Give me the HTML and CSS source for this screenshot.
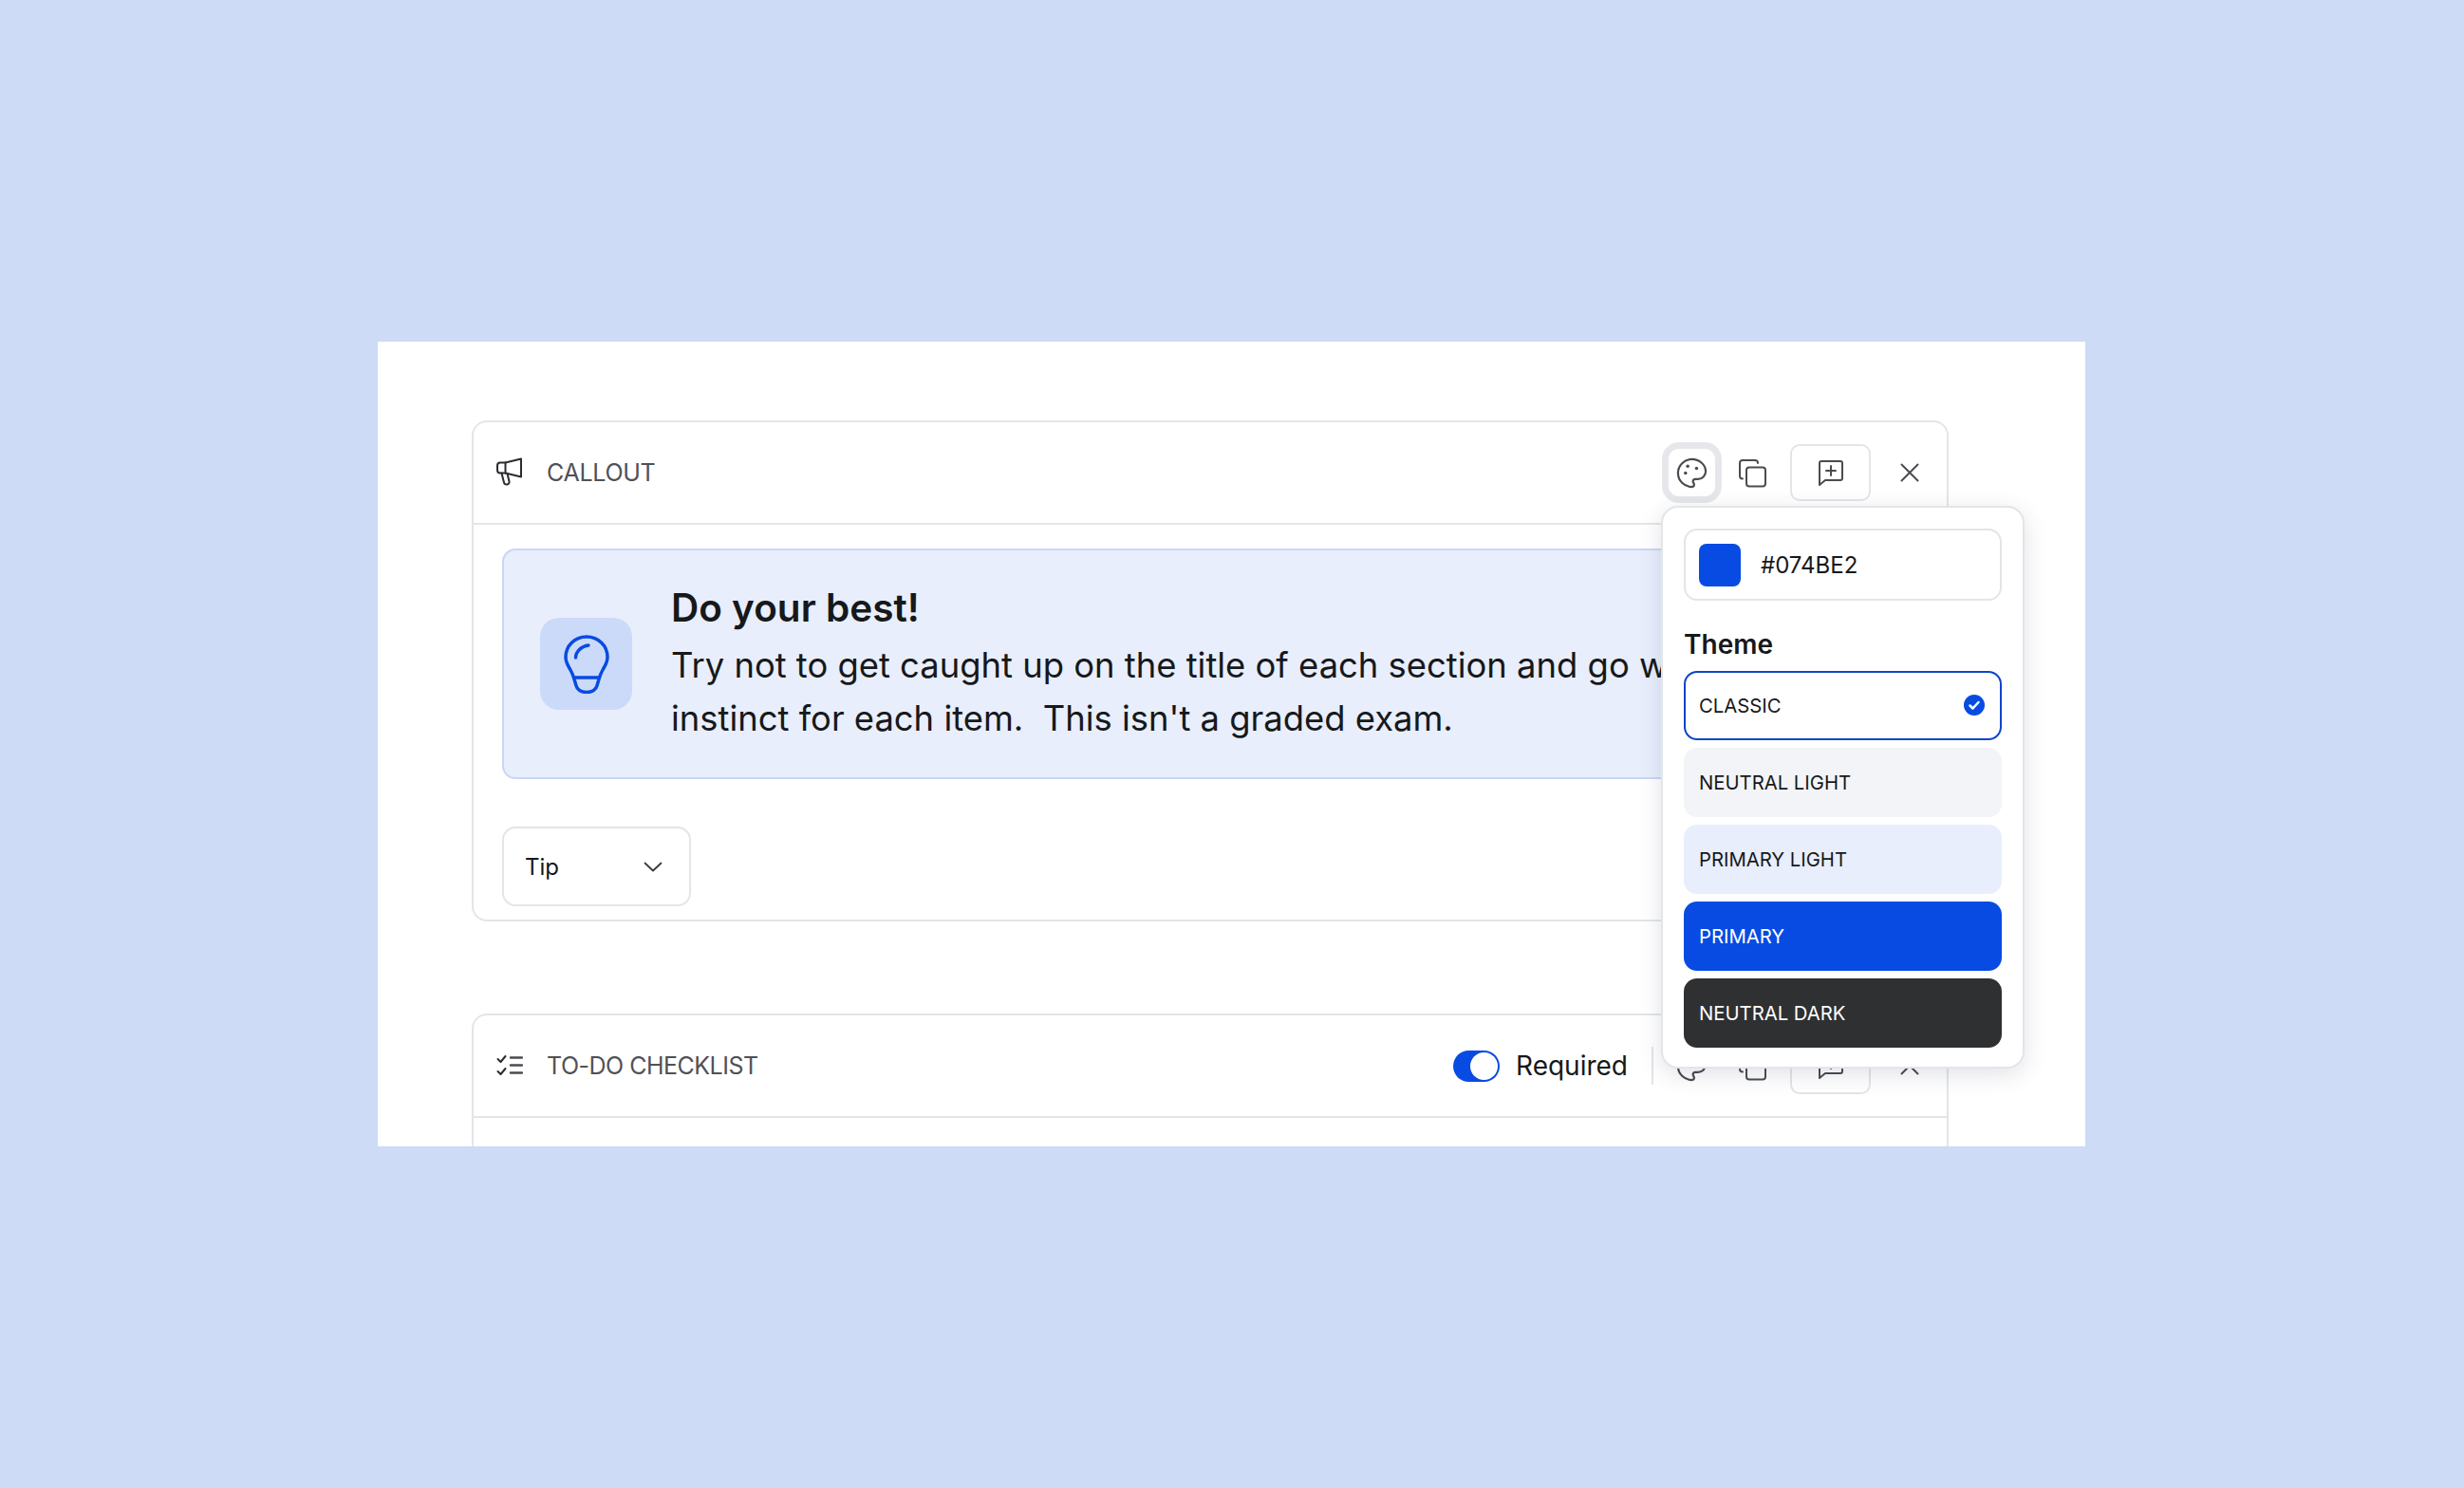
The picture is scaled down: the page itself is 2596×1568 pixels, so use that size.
FILE: index.html
```html
<!DOCTYPE html>
<html lang="en">
<head>
<meta charset="UTF-8">
<title>Callout block editor</title>
<link rel="stylesheet" href="styles.css">
</head>
<body>

<div class="panel">

	<!-- callout block -->
	<section class="card card_callout">
		<div class="card_head">
			<svg class="type_icon" width="28" height="32" viewBox="0 0 28 32"><path d="M9.500 5.500 26 1.500v19l-16.500-4H4a3 3 0 0 1-3-3V8.500a3 3 0 0 1 3-3z"/><path d="M9.500 5.500v11"/><path d="M5.500 16.500l2.500 10c.8 3 6 2.500 5.500-1l-2-8.500"/></svg>
			<span class="card_name">CALLOUT</span>
			<div class="actions">
				<button class="icon_btn active">
					<svg class="palette" width="35" height="35" viewBox="0 0 24 24"><path d="M12 2C6.500 2 2 6.500 2 12s4.500 10 10 10c.926 0 1.648-.746 1.648-1.688 0-.437-.18-.835-.437-1.125-.29-.289-.438-.652-.438-1.125a1.640 1.640 0 0 1 1.668-1.668h1.996c3.051 0 5.555-2.503 5.555-5.554C21.965 6.012 17.461 2 12 2z"/><circle class="dot" cx="7.400" cy="12" r="1.200"/><circle class="dot" cx="9" cy="7" r="1.200"/><circle class="dot" cx="15.400" cy="8.600" r="1.200"/></svg>
				</button>
				<button class="icon_btn">
					<svg width="31" height="31" viewBox="0 0 31 31"><rect x="9" y="9.500" width="20" height="20" rx="3"/><path d="M5 21.500c-2 0-3-1.200-3-3V5c0-2 1.200-3 3-3h13c1.800 0 3 1 3 3"/></svg>
				</button>
				<button class="comment_btn">
					<svg width="28" height="28" viewBox="0 0 28 28"><path d="M4 2h20c1 0 2 1 2 2v16c0 1-1 2-2 2H8l-6 5V4c0-1 1-2 2-2z"/><path d="M14 7v10M9 12h10"/></svg>
				</button>
				<button class="icon_btn">
					<svg width="20" height="20" viewBox="0 0 20 20"><path d="M1.500 1.500l17 17M18.500 1.500l-17 17"/></svg>
				</button>
			</div>
		</div>
		<div class="card_body">
			<div class="callout">
				<div class="callout_icon">
					<svg width="48" height="62" viewBox="0 0 48 62"><path d="M24 2C11.500 2 2 11.500 2 23.500c0 5.500 2.500 9 4.500 12.500 2 3.500 3 6 4 9l2.500 8.500c1 4 5 7 11 7s10-3 11-7l2.500-8.500c1-3 2-5.500 4-9S46 29 46 23.500C46 11.500 36.500 2 24 2z"/><path d="M10.500 45h27"/><path d="M12.500 24c0-6.500 6-12 13.500-13"/></svg>
				</div>
				<div class="callout_text">
					<h2>Do your best!</h2>
					<p>Try not to get caught up on the title of each section and go with your<br>instinct for each item.&nbsp; This isn't a graded exam.</p>
				</div>
			</div>
			<div class="select">
				<span>Tip</span>
				<svg width="20" height="11" viewBox="0 0 20 11"><path d="M1.500 1.500 10 9.500l8.500-8"/></svg>
			</div>
		</div>

		<!-- colour popup -->
		<div class="popup">
			<div class="hex_input">
				<span class="swatch"></span>
				<span>#074BE2</span>
			</div>
			<h3>Theme</h3>
			<ul class="themes">
				<li class="classic">CLASSIC
					<svg width="22" height="22" viewBox="0 0 22 22"><circle class="check_bg" cx="11" cy="11" r="11"/><path class="check" d="M6.500 11.500l3 3 6-6.500"/></svg>
				</li>
				<li class="neutral_light">NEUTRAL LIGHT</li>
				<li class="primary_light">PRIMARY LIGHT</li>
				<li class="primary">PRIMARY</li>
				<li class="neutral_dark">NEUTRAL DARK</li>
			</ul>
		</div>
	</section>

	<!-- checklist block -->
	<section class="card card_todo">
		<div class="card_head">
			<svg class="type_icon list_icon" width="28" height="24" viewBox="0 0 28 24"><path d="M1.500 5l3 3 5-6M1.500 18l3 3 5-6"/><path class="lines" d="M15 3.500h12M15 11.500h12M15 19.500h12"/></svg>
			<span class="card_name">TO-DO CHECKLIST</span>
			<div class="required">
				<span class="toggle"><span class="knob"></span></span>
				<span>Required</span>
			</div>
			<div class="actions">
				<button class="icon_btn">
					<svg class="palette" width="35" height="35" viewBox="0 0 24 24"><path d="M12 2C6.500 2 2 6.500 2 12s4.500 10 10 10c.926 0 1.648-.746 1.648-1.688 0-.437-.18-.835-.437-1.125-.29-.289-.438-.652-.438-1.125a1.640 1.640 0 0 1 1.668-1.668h1.996c3.051 0 5.555-2.503 5.555-5.554C21.965 6.012 17.461 2 12 2z"/></svg>
				</button>
				<button class="icon_btn">
					<svg width="31" height="31" viewBox="0 0 31 31"><rect x="9" y="9.500" width="20" height="20" rx="3"/><path d="M5 21.500c-2 0-3-1.200-3-3V5c0-2 1.200-3 3-3h13c1.800 0 3 1 3 3"/></svg>
				</button>
				<button class="comment_btn">
					<svg width="28" height="28" viewBox="0 0 28 28"><path d="M4 2h20c1 0 2 1 2 2v16c0 1-1 2-2 2H8l-6 5V4c0-1 1-2 2-2z"/><path d="M14 7v10M9 12h10"/></svg>
				</button>
				<button class="icon_btn">
					<svg width="20" height="20" viewBox="0 0 20 20"><path d="M1.500 1.500l17 17M18.500 1.500l-17 17"/></svg>
				</button>
			</div>
		</div>
		<div class="card_empty"></div>
	</section>

</div>

</body>
</html>
```

FILE: styles.css
```css
html,body{margin:0;height:100%;}
body{background:#cddbf7;display:grid;place-items:center;font-family:Inter,"Liberation Sans",sans-serif;color:#17181a;box-sizing:border-box;padding-right:1px;}
ul,h2,h3,p{margin:0;padding:0;}
svg{display:block;fill:none;stroke:#4b4c50;stroke-width:2;stroke-linecap:round;stroke-linejoin:round;}
button{font:inherit;background:none;border:0;padding:0;}

.panel{width:1799px;height:848px;background:#fff;overflow:hidden;box-sizing:border-box;padding:83px 144px 0 99px;display:flex;flex-direction:column;gap:97px;}

.card{border:2px solid #e3e5e8;border-radius:16px;position:relative;flex:none;}
.card_callout{height:528px;box-sizing:border-box;z-index:1;}
.card_todo{height:300px;}
.card_head{height:106px;border-bottom:2px solid #e3e5e8;display:flex;align-items:center;padding:0 7px 0 24px;}
.type_icon{stroke:#2b2c30;margin-right:25px;flex:none;}
.list_icon .lines{stroke:#4b4c50;stroke-width:2.500;}
.card_name{font-size:25px;color:#505155;letter-spacing:-.3px;}
.card_todo .card_name{letter-spacing:-.5px;}

.actions{margin-left:auto;display:flex;align-items:center;}
.icon_btn{width:63px;height:64px;display:flex;align-items:center;justify-content:center;box-sizing:border-box;border-radius:18px;margin-right:1px;}
.icon_btn.active{border:7px solid #e6e7ea;}
.palette{stroke-width:1.500;}
.dot{fill:#4b4c50;stroke:none;}
.comment_btn{width:85px;height:60px;border:2px solid #e3e5e8;border-radius:10px;box-sizing:border-box;display:flex;align-items:center;justify-content:center;margin:0 9px 0 7px;}

.card_body{padding:25px 30px;}
.callout{height:243px;box-sizing:border-box;background:#e8eefc;border:2px solid #c9d7f5;border-radius:14px;display:flex;align-items:center;padding-left:38px;}
.callout_icon{width:97px;height:97px;background:#cbdaf8;border-radius:20px;display:flex;align-items:center;justify-content:center;margin-right:41px;flex:none;}
.callout_icon svg{stroke:#074be2;stroke-width:3.500;}
.callout_text{margin-top:-2px;}
.callout_text h2{font-size:40.500px;font-weight:600;line-height:56px;margin-bottom:4px;}
.callout_text p{font-size:36.400px;line-height:56px;white-space:nowrap;}

.select{width:199px;height:84px;margin-top:50px;border:2px solid #e3e5e8;border-radius:14px;box-sizing:border-box;display:flex;align-items:center;justify-content:space-between;padding:0 28px 0 22px;font-size:24px;}
.select svg{stroke:#3a3b3f;stroke-width:1.800;}

.popup{position:absolute;left:1251px;top:88px;width:383px;height:593px;box-sizing:border-box;background:#fff;border:2px solid #e3e5e8;border-radius:18px;box-shadow:0 6px 24px rgba(40,50,80,.14);padding:22px 22px 0;}
.hex_input{height:76px;border:2px solid #e3e5e8;border-radius:14px;box-sizing:border-box;display:flex;align-items:center;gap:21px;padding-left:14px;font-size:24px;}
.swatch{width:44px;height:45px;background:#074be2;border-radius:8px;}
.popup h3{font-size:28px;font-weight:600;line-height:36px;margin:28px 0 10px;}
.themes{list-style:none;display:flex;flex-direction:column;gap:8.500px;}
.themes li{height:72.500px;box-sizing:border-box;border-radius:14px;display:flex;align-items:center;justify-content:space-between;padding:0 16px;font-size:20.300px;font-weight:400;}
.classic{border:2px solid #0b46c9;padding-left:14px !important;}
.check_bg{fill:#074be2;stroke:none;}
.check{stroke:#fff;stroke-width:2.500;}
.neutral_light{background:#f3f4f7;}
.primary_light{background:#e8eefc;}
.primary{background:#074be2;color:#fff;}
.neutral_dark{background:#2f3032;color:#fff;}

.required{margin-left:auto;display:flex;align-items:center;gap:17px;font-size:28px;padding-right:25px;height:40px;border-right:2px solid #e3e5e8;}
.required + .actions{margin-left:9px;}
.toggle{width:49px;height:33px;background:#074be2;border-radius:17px;display:flex;justify-content:flex-end;box-sizing:border-box;padding:2px;}
.knob{width:29px;height:29px;background:#fff;border-radius:50%;}
```
